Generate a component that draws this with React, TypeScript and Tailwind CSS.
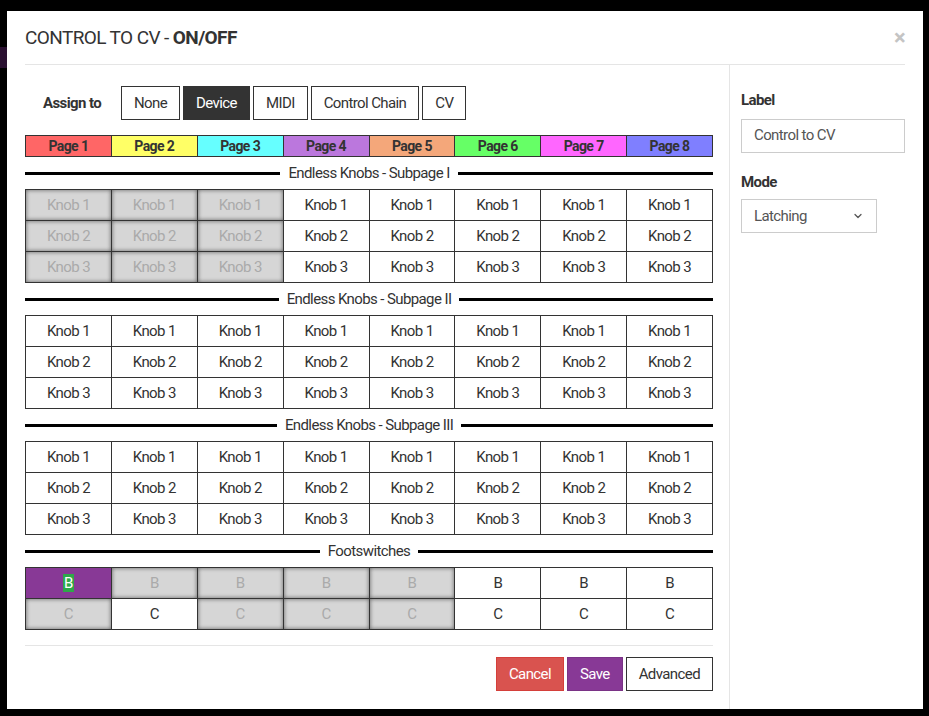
import { ChevronDown } from "lucide-react";

const pages = [
  { name: "Page 1", color: "bg-[#ff6666]" },
  { name: "Page 2", color: "bg-[#ffff66]" },
  { name: "Page 3", color: "bg-[#66ffff]" },
  { name: "Page 4", color: "bg-[#bb77dd]" },
  { name: "Page 5", color: "bg-[#f4a77a]" },
  { name: "Page 6", color: "bg-[#66ff66]" },
  { name: "Page 7", color: "bg-[#ff66ff]" },
  { name: "Page 8", color: "bg-[#7f7fff]" },
];

const assignTargets = ["None", "Device", "MIDI", "Control Chain", "CV"];

type Cell = { label: string; disabled?: boolean; active?: boolean };

const knobRows = (disabledCols: number): Cell[][] =>
  ["Knob 1", "Knob 2", "Knob 3"].map((label) =>
    pages.map((_, i) => ({ label, disabled: i < disabledCols }))
  );

const footRows: Cell[][] = [
  pages.map((_, i) => ({
    label: "B",
    active: i === 0,
    disabled: i > 0 && i < 5,
  })),
  pages.map((_, i) => ({ label: "C", disabled: i === 0 || (i > 1 && i < 5) })),
];

const sections = [
  { title: "Endless Knobs - Subpage I", rows: knobRows(3) },
  { title: "Endless Knobs - Subpage II", rows: knobRows(0) },
  { title: "Endless Knobs - Subpage III", rows: knobRows(0) },
  { title: "Footswitches", rows: footRows },
];

function Divider({ title }: { title: string }) {
  return (
    <div className="h-[32px] flex items-center gap-2">
      <div className="flex-1 h-[3px] bg-black" />
      <span className="text-[15px] leading-none text-[#333]">{title}</span>
      <div className="flex-1 h-[3px] bg-black" />
    </div>
  );
}

function ActuatorGrid({ rows }: { rows: Cell[][] }) {
  return (
    <table className="w-full table-fixed border-collapse">
      <tbody>
        {rows.map((row, r) => (
          <tr key={r}>
            {row.map((cell, c) => (
              <td
                key={c}
                className={
                  "h-[31px] border border-[#333] p-0 text-center text-[15px] " +
                  (cell.active
                    ? "bg-[#883996]"
                    : cell.disabled
                    ? "bg-[#d6d6d6] text-[#aaa] shadow-[inset_0_0_4px_rgba(0,0,0,0.55)]"
                    : "bg-white text-[#333]")
                }
              >
                {cell.active ? (
                  <span className="bg-[#2ea84a] text-white px-[1px]">{cell.label}</span>
                ) : (
                  cell.label
                )}
              </td>
            ))}
          </tr>
        ))}
      </tbody>
    </table>
  );
}

export default function App() {
  return (
    <div
      className="h-[716px] bg-black pl-[7px] pt-[11px] relative overflow-hidden"
      style={{ fontFamily: "Roboto, 'Liberation Sans', sans-serif" }}
    >
      <div className="absolute left-0 top-[47px] w-[7px] h-[21px] bg-[#2a1030]" />
      <div className="w-[916px] h-[698px] bg-white flex flex-col px-[18px] tracking-[-0.6px]">
        {/* header */}
        <div className="h-[54px] border-b border-[#e5e5e5] flex items-center justify-between">
          <h4 className="text-[19px] text-[#333] mt-[1px]">
            CONTROL TO CV - <b className="font-bold">ON/OFF</b>
          </h4>
          <span className="text-[#c4c4c4] text-[22px] font-bold leading-none">×</span>
        </div>

        {/* body */}
        <div className="flex flex-1">
          <div className="w-[688px] flex flex-col pt-[21px]">
            <div className="flex items-center">
              <span className="w-[96px] pl-[18px] text-[15px] font-bold text-[#333]">Assign to</span>
              <div className="flex gap-[3px]">
                {assignTargets.map((t) => (
                  <button
                    key={t}
                    className={
                      "h-[34px] px-[12px] border border-[#333] text-[15px] " +
                      (t === "Device" ? "bg-[#333] text-white" : "bg-white text-[#333]")
                    }
                  >
                    {t}
                  </button>
                ))}
              </div>
            </div>

            <table className="w-full table-fixed border-collapse mt-[15px]">
              <tbody>
                <tr>
                  {pages.map((p) => (
                    <td
                      key={p.name}
                      className={"h-[21px] border border-[#333] p-0 text-center text-[14px] leading-[18px] font-bold text-[#333] " + p.color}
                    >
                      {p.name}
                    </td>
                  ))}
                </tr>
              </tbody>
            </table>

            {sections.map((s) => (
              <div key={s.title}>
                <Divider title={s.title} />
                <ActuatorGrid rows={s.rows} />
              </div>
            ))}

            <div className="mt-[15px] border-t border-[#e5e5e5] pt-[11px] flex justify-end gap-[3px]">
              <button className="h-[34px] px-[12px] bg-[#d9534f] border border-[#d43f3a] text-white text-[15px]">
                Cancel
              </button>
              <button className="h-[34px] px-[12px] bg-[#883996] border border-[#7a3386] text-white text-[15px]">
                Save
              </button>
              <button className="h-[34px] px-[12px] bg-white border border-[#333] text-[#333] text-[15px]">
                Advanced
              </button>
            </div>
          </div>

          {/* settings column */}
          <div className="ml-[16px] flex-1 border-l border-[#e5e5e5] pl-[11px] pt-[24px]">
            <div className="text-[15px] font-bold text-[#333]">Label</div>
            <div className="mt-[7px] h-[34px] border border-[#ccc] flex items-center px-[12px] text-[15px] text-[#555]">
              Control to CV
            </div>
            <div className="mt-[18px] text-[15px] font-bold text-[#333]">Mode</div>
            <div className="mt-[6px] w-[136px] h-[34px] border border-[#ccc] flex items-center justify-between px-[12px] text-[15px] text-[#555]">
              <span>Latching</span>
              <ChevronDown size={12} strokeWidth={2.5} className="text-[#555]" />
            </div>
          </div>
        </div>
      </div>
    </div>
  );
}
